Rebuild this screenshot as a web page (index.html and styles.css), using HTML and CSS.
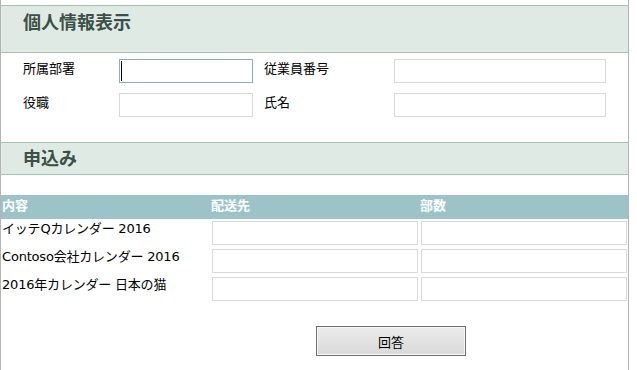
FILE: index.html
```html
<!DOCTYPE html>
<html lang="ja">
<head>
<meta charset="utf-8">
<title>個人情報表示</title>
<link rel="stylesheet" href="styles.css">
</head>
<body>
<div class="page">
  <h2 class="band band-main">個人情報表示</h2>
  <div class="form">
    <div class="form-row">
      <span class="label label-a">所属部署</span>
      <span class="field-wrap">
        <input class="field field-a focused" type="text">
        <span class="caret"></span>
      </span>
      <span class="label label-b">従業員番号</span>
      <input class="field field-b" type="text">
    </div>
    <div class="form-row">
      <span class="label label-a">役職</span>
      <input class="field field-a" type="text">
      <span class="label label-b">氏名</span>
      <input class="field field-b" type="text">
    </div>
  </div>

  <h2 class="band band-sub">申込み</h2>

  <div class="table">
    <div class="t-head">
      <span class="th">内容</span>
      <span class="th">配送先</span>
      <span class="th">部数</span>
    </div>
    <div class="t-row">
      <span class="td">イッテQカレンダー 2016</span>
      <span class="td"><input class="cell-input" type="text"></span>
      <span class="td"><input class="cell-input" type="text"></span>
    </div>
    <div class="t-row">
      <span class="td">Contoso会社カレンダー 2016</span>
      <span class="td"><input class="cell-input" type="text"></span>
      <span class="td"><input class="cell-input" type="text"></span>
    </div>
    <div class="t-row">
      <span class="td">2016年カレンダー 日本の猫</span>
      <span class="td"><input class="cell-input" type="text"></span>
      <span class="td"><input class="cell-input" type="text"></span>
    </div>
  </div>

  <div class="actions">
    <button class="btn" type="button">回答</button>
  </div>
</div>
</body>
</html>
```

FILE: styles.css
```css
html, body {
  margin: 0;
  padding: 0;
  background: #ffffff;
}

body {
  font-family: "Noto Sans CJK JP", "Noto Sans", sans-serif;
  font-size: 13px;
  color: #000;
}

.page {
  width: 627px;
  min-height: 370px;
  border-left: 1px solid #b4b4b4;
  border-right: 1px solid #b4b4b4;
  padding-top: 5px;
  box-sizing: content-box;
}

.band {
  margin: 0;
  background: #e0eae5;
  border-top: 1px solid #a9c2b8;
  border-bottom: 1px solid #a9c2b8;
  color: #3b5046;
  font-size: 18px;
  font-weight: bold;
  line-height: 24px;
  padding-left: 22px;
}

.band-main {
  padding-top: 3px;
  box-sizing: border-box;
  height: 48px;
}

.band-sub {
  margin-top: 25px;
  height: 33px;
  box-sizing: border-box;
  padding-top: 2px;
  border-color: #a3c4b3;
}

.form {
  padding-left: 22px;
  padding-top: 6px;
}

.form-row {
  display: flex;
  align-items: flex-start;
  height: 24px;
  margin-bottom: 10px;
}

.form-row:last-child {
  margin-bottom: 0;
}

.label {
  line-height: 18px;
}

.label-a {
  width: 96px;
}

.label-b {
  width: 130px;
  margin-left: 11px;
}

.field-wrap {
  position: relative;
  display: block;
  height: 24px;
}

.field {
  display: block;
  height: 24px;
  box-sizing: border-box;
  border: 1px solid #d9d9d9;
  padding: 0;
  margin: 0;
  outline: none;
  background: #fff;
  font: inherit;
}

.field-a {
  width: 134px;
}

.field-b {
  width: 212px;
}

.field.focused {
  border-color: #8fa9c6;
}

.caret {
  position: absolute;
  left: 2px;
  top: 2px;
  width: 1px;
  height: 20px;
  background: #000;
}

.table {
  margin-top: 20px;
}

.t-head,
.t-row {
  display: grid;
  grid-template-columns: 209px 209px 209px;
}

.t-head {
  background: #9cc4c8;
  height: 24px;
}

.th {
  color: #ffffff;
  font-weight: bold;
  line-height: 20px;
  padding-left: 1px;
}

.t-row {
  height: 28px;
}

.td {
  font-family: "DejaVu Sans", "Noto Sans CJK JP", sans-serif;
  font-size: 13px;
  line-height: 20px;
  padding-left: 1px;
  letter-spacing: -0.2px;
}

.cell-input {
  display: block;
  width: 206px;
  height: 24px;
  box-sizing: border-box;
  margin: 2px 0 0 1px;
  border: 1px solid #d9d9d9;
  padding: 0;
  outline: none;
  background: #fff;
  font: inherit;
}

.actions {
  padding-left: 315px;
  padding-top: 23px;
}

.btn {
  width: 150px;
  height: 30px;
  box-sizing: border-box;
  border: 1px solid #6e6e6e;
  box-shadow: inset 0 0 0 1px #f7f7f7;
  background: linear-gradient(#ececec, #d9d9d9);
  font-family: "Noto Sans CJK JP", sans-serif;
  font-size: 13px;
  color: #000;
  padding: 0;
  cursor: pointer;
}
```
